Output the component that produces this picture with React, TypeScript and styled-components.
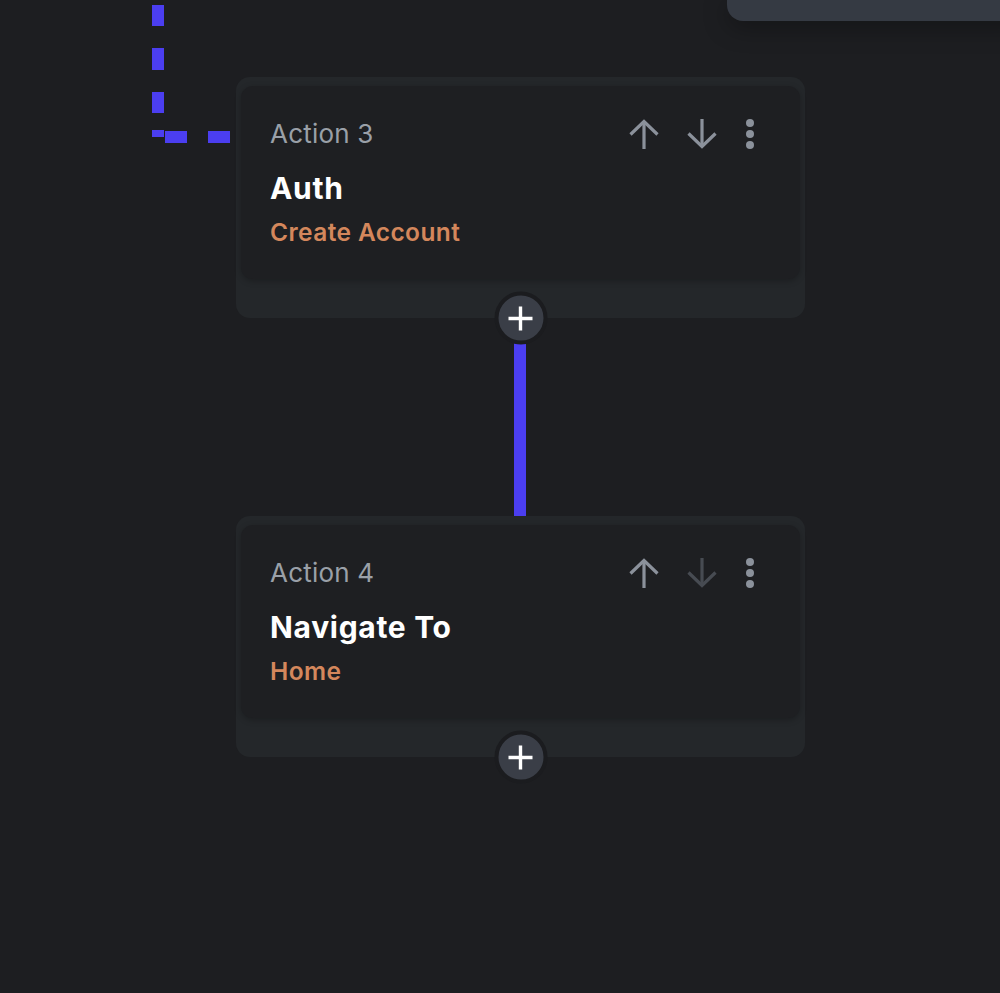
import styled, { createGlobalStyle } from 'styled-components';

const GlobalStyle = createGlobalStyle`
  html, body {
    margin: 0;
    padding: 0;
    background: #1d1e21;
  }
  body {
    font-family: Inter, "Noto Sans", sans-serif;
    -webkit-font-smoothing: antialiased;
  }
`;

const Canvas = styled.div`
  position: relative;
  width: 1000px;
  height: 993px;
  overflow: hidden;
  background: #1d1e21;
`;

const TopPanel = styled.div`
  position: absolute;
  top: 0;
  left: 727px;
  right: -20px;
  height: 21px;
  background: #353a43;
  border-bottom-left-radius: 16px;
  box-shadow: 0 6px 24px rgba(0, 0, 0, 0.35);
`;

const Wires = styled.svg`
  position: absolute;
  left: 0;
  top: 0;
  pointer-events: none;
`;

const Column = styled.div`
  display: flex;
  flex-direction: column;
  width: 569px;
  padding: 77px 0 0 236px;
`;

const Node = styled.div`
  position: relative;
  background: #24272a;
  border-radius: 14px;
  padding: 9px 5px 39px;
`;

const Card = styled.div`
  background: #1e1f22;
  border-radius: 12px;
  padding: 28px 30px 31px 29px;
  box-shadow: 0 2px 6px rgba(0, 0, 0, 0.25);
`;

const Header = styled.div`
  display: flex;
  align-items: center;
  height: 40px;
  margin-bottom: 14px;
`;

const Label = styled.div`
  flex: 1;
  font-size: 26px;
  line-height: 40px;
  color: #9aa0a8;
  letter-spacing: 0.2px;
`;

const Tools = styled.div`
  display: flex;
  align-items: center;
`;

const ToolButton = styled.button<{ $disabled?: boolean; $gap?: number }>`
  display: flex;
  align-items: center;
  justify-content: center;
  width: 40px;
  height: 40px;
  padding: 0;
  margin-left: ${(p) => p.$gap ?? 0}px;
  border: 0;
  background: transparent;
  color: ${(p) => (p.$disabled ? '#474b52' : '#8b919b')};
  cursor: pointer;
`;

const Title = styled.div`
  font-size: 30px;
  font-weight: 700;
  line-height: 40px;
  color: #ffffff;
  letter-spacing: 0.7px;
`;

const Subtitle = styled.div`
  margin-top: 8px;
  font-size: 24.5px;
  font-weight: 600;
  line-height: 32px;
  color: #d4875c;
  letter-spacing: 0.4px;
`;

const AddButton = styled.button`
  position: absolute;
  left: 50%;
  bottom: 0;
  transform: translate(-50%, 50%);
  z-index: 2;
  display: flex;
  align-items: center;
  justify-content: center;
  width: 53px;
  height: 53px;
  padding: 0;
  border-radius: 50%;
  border: 4px solid #1b1c1f;
  background: #3a3e47;
  color: #ffffff;
  cursor: pointer;
`;

const Link = styled.div`
  width: 12px;
  height: 198px;
  margin: 0 auto;
  transform: translateX(-1px);
  background: #4b3ef0;
`;

function ArrowUp() {
  return (
    <svg width="32" height="32" viewBox="0 0 32 32" fill="none" stroke="currentColor" strokeWidth="3.2">
      <path d="M16 3.5V31" />
      <path d="M2.5 16.5L16 3.5l13.5 13" />
    </svg>
  );
}

function ArrowDown() {
  return (
    <svg width="32" height="32" viewBox="0 0 32 32" fill="none" stroke="currentColor" strokeWidth="3.2">
      <path d="M16 1V28.5" />
      <path d="M2.5 15.5L16 28.5l13.5-13" />
    </svg>
  );
}

function Dots() {
  return (
    <svg width="10" height="32" viewBox="0 0 10 32" fill="currentColor">
      <circle cx="5" cy="5" r="4" />
      <circle cx="5" cy="16" r="4" />
      <circle cx="5" cy="27" r="4" />
    </svg>
  );
}

function Plus() {
  return (
    <svg width="26" height="26" viewBox="0 0 26 26" stroke="currentColor" strokeWidth="3.4">
      <path d="M13 1v24M1 13h24" />
    </svg>
  );
}

type Action = { label: string; title: string; subtitle: string; last?: boolean };

const actions: Action[] = [
  { label: 'Action 3', title: 'Auth', subtitle: 'Create Account' },
  { label: 'Action 4', title: 'Navigate To', subtitle: 'Home', last: true },
];

function ActionNode({ action }: { action: Action }) {
  return (
    <Node>
      <Card>
        <Header>
          <Label>{action.label}</Label>
          <Tools>
            <ToolButton aria-label="Move up">
              <ArrowUp />
            </ToolButton>
            <ToolButton aria-label="Move down" $gap={18} $disabled={action.last}>
              <ArrowDown />
            </ToolButton>
            <ToolButton aria-label="More" $gap={8}>
              <Dots />
            </ToolButton>
          </Tools>
        </Header>
        <Title>{action.title}</Title>
        <Subtitle>{action.subtitle}</Subtitle>
      </Card>
      <AddButton aria-label="Add action">
        <Plus />
      </AddButton>
    </Node>
  );
}

export default function App() {
  return (
    <>
      <GlobalStyle />
      <Canvas>
        <TopPanel />
        <Wires width="260" height="160" viewBox="0 0 260 160">
          <path
            d="M158 0V137"
            stroke="#4b3ef0"
            strokeWidth="12"
            strokeDasharray="0 5 21 22 22 22 21 17 7 20"
            fill="none"
          />
          <path d="M165 137H231" stroke="#4b3ef0" strokeWidth="12" strokeDasharray="22 21" fill="none" />
        </Wires>
        <Column>
          {actions.map((a, i) => (
            <div key={a.label}>
              {i > 0 && <Link />}
              <ActionNode action={a} />
            </div>
          ))}
        </Column>
      </Canvas>
    </>
  );
}
